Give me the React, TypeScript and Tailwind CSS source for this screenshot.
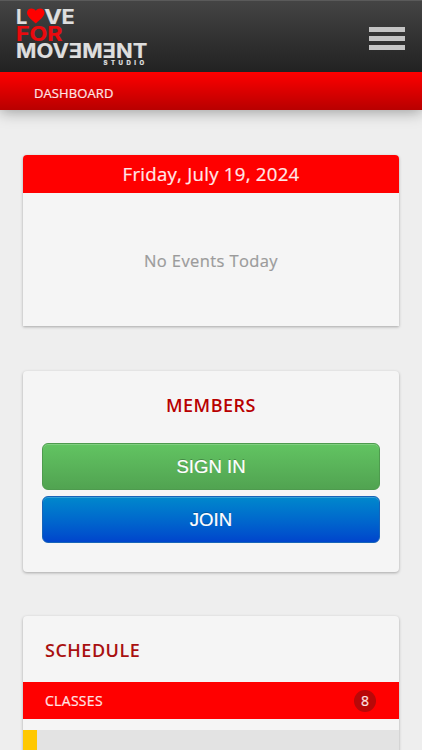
import type { ReactNode } from "react";

function Logo() {
  return (
    <svg
      width="136"
      height="64"
      viewBox="0 0 136 64"
      className="font-['Inter',sans-serif] font-bold"
      fill="#dedede"
      stroke="#dedede"
      strokeWidth="0.2"
    >
      <text x="0" y="19.5" fontSize="20" textLength="11.3" lengthAdjust="spacingAndGlyphs">L</text>
      <path
        d="M19.8 19.4C17.2 16.8 11 13 11 8.7C11 4 17.2 2.8 19.8 6.8C22.4 2.8 28.5 4 28.5 8.7C28.5 13 22.4 16.8 19.8 19.4Z"
        fill="#ff0000"
        stroke="none"
      />
      <text x="28.3" y="19.5" fontSize="20" textLength="17.6" lengthAdjust="spacingAndGlyphs">V</text>
      <text x="45.6" y="19.5" fontSize="20" textLength="13.2" lengthAdjust="spacingAndGlyphs">E</text>
      <text
        x="0"
        y="36.6"
        fontSize="20"
        textLength="46.5"
        lengthAdjust="spacingAndGlyphs"
        fill="#ea0a0e"
        stroke="#ea0a0e"
      >
        FOR
      </text>
      <text x="0" y="53.6" fontSize="20" textLength="131.3" lengthAdjust="spacingAndGlyphs">
        MOVƎMƎNT
      </text>
      <text x="87.6" y="60.6" fontSize="6" textLength="40.5" className="font-extrabold">
        STUDIO
      </text>
    </svg>
  );
}

function Card({ children, className }: { children: ReactNode; className: string }) {
  return (
    <section
      className={`mx-auto w-[376px] overflow-hidden bg-[#f5f5f5] shadow-[0_1px_3px_rgba(0,0,0,0.3)] ${className}`}
    >
      {children}
    </section>
  );
}

export default function App() {
  return (
    <div className="h-[750px] w-[422px] overflow-hidden bg-[#eeeeee] font-['Open_Sans','Noto_Sans',sans-serif]">
      <header className="shadow-[0_2px_14px_rgba(0,0,0,0.35)]">
        <div className="flex h-[72px] justify-between border-t border-[#5a5a5a] bg-linear-to-b from-[#444444] to-[#222222] pt-[3px] pr-[17px] pl-4">
          <Logo />
          <button aria-label="Menu" className="mt-[22.5px] flex h-[23px] w-9 flex-col justify-between">
            <span className="h-[5px] w-full bg-[#c4c4c4]" />
            <span className="h-[5px] w-full bg-[#c4c4c4]" />
            <span className="h-[5px] w-full bg-[#c4c4c4]" />
          </button>
        </div>
        <nav className="flex h-[38px] items-center bg-linear-to-b from-[#ff0000] to-[#b80000] pt-[5px] pl-[34px] text-[13px] text-[#ffe5e5]">
          <span className="tracking-[0.1px] [-webkit-text-stroke:0.2px]">DASHBOARD</span>
        </nav>
      </header>

      <main className="flex flex-col gap-[45px] pt-[45px]">
        <Card className="h-[171px] rounded-t-[4px]">
          <h2 className="flex h-[38px] items-center justify-center bg-[#ff0000] text-[18.6px] tracking-[0.27px] text-[#ffe9e9] [-webkit-text-stroke:0.2px]">
            Friday, July 19, 2024
          </h2>
          <p className="flex h-[133px] items-center justify-center pt-1 text-[16.5px] tracking-[0.4px] text-[#9b9b9b] [-webkit-text-stroke:0.2px]">
            No Events Today
          </p>
        </Card>

        <Card className="h-[201px] rounded-[4px] px-[19px]">
          <h2 className="flex h-[72px] items-center justify-center pb-1 text-[18px] font-semibold tracking-[0.5px] text-[#b80000]">
            MEMBERS
          </h2>
          <div className="flex flex-col gap-[6px] font-['Liberation_Sans',sans-serif] text-[18.6px] text-white [-webkit-text-stroke:0.2px]">
            <button className="h-[47px] rounded-[6px] border border-[#4e9b4e] bg-linear-to-b from-[#62c462] to-[#51a351] shadow-[inset_0_1px_0_rgba(255,255,255,0.2)] [text-shadow:0_-1px_0_rgba(0,0,0,0.25)]">
              SIGN IN
            </button>
            <button className="h-[47px] rounded-[6px] border border-[#1764b8] bg-linear-to-b from-[#0088cc] to-[#0044cc] shadow-[inset_0_1px_0_rgba(255,255,255,0.2)] [text-shadow:0_-1px_0_rgba(0,0,0,0.25)]">
              JOIN
            </button>
          </div>
        </Card>

        <Card className="-mt-px h-[200px] rounded-[4px]">
          <h2 className="flex h-[66px] items-center pt-[2px] pl-[22px] text-[18px] font-semibold tracking-[0.5px] text-[#a91010]">
            SCHEDULE
          </h2>
          <div className="flex h-[37px] items-center justify-between bg-[#ff0000] pr-[23px] pl-[22px] text-[14px] text-[#ffe5e5] [-webkit-text-stroke:0.2px]">
            <span className="tracking-[0.3px]">CLASSES</span>
            <span className="flex size-[22px] items-center justify-center rounded-full bg-[#b80808]">8</span>
          </div>
          <div className="mt-[11px] h-24 border-l-[14px] border-[#ffc800] bg-[#e3e3e3]" />
        </Card>
      </main>
    </div>
  );
}
